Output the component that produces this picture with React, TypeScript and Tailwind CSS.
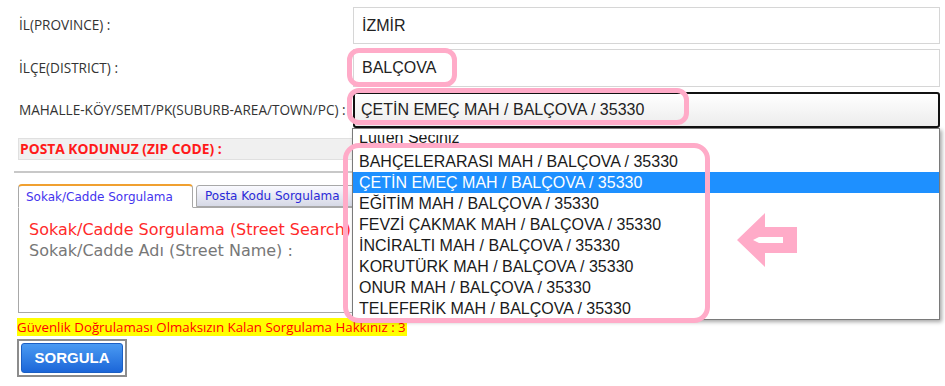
const options = [
  'Lütfen Seçiniz',
  'BAHÇELERARASI MAH / BALÇOVA / 35330',
  'ÇETİN EMEÇ MAH / BALÇOVA / 35330',
  'EĞİTİM MAH / BALÇOVA / 35330',
  'FEVZİ ÇAKMAK MAH / BALÇOVA / 35330',
  'İNCİRALTI MAH / BALÇOVA / 35330',
  'KORUTÜRK MAH / BALÇOVA / 35330',
  'ONUR MAH / BALÇOVA / 35330',
  'TELEFERİK MAH / BALÇOVA / 35330',
];

const label = "w-[334px] shrink-0 text-[13.6px] text-[#333] font-['Open_Sans',sans-serif]";
const field = "flex h-full w-[587px] items-center border border-[#d6d6d6] pl-[8px] text-[16px] text-[#222] font-['Liberation_Sans',Arial,sans-serif]";

export default function App() {
  return (
    <div className="relative h-[386px] w-[945px] overflow-hidden bg-white">
      <div className="pl-[19px] pt-[7px]">
        <div className="flex h-[37px] items-center">
          <span className={label}>İL(PROVINCE) :</span>
          <div className={field}>İZMİR</div>
        </div>
        <div className="mt-[5px] flex h-[38px] items-center">
          <span className={label}>İLÇE(DISTRICT) :</span>
          <div className={field}>
            <span className="relative z-10">BALÇOVA</span>
          </div>
        </div>
        <div className="mt-[5px] flex h-[36px] items-center">
          <span className={label}>MAHALLE-KÖY/SEMT/PK(SUBURB-AREA/TOWN/PC) :</span>
          <div className="flex h-full w-[587px] items-center rounded-[3px] border-2 border-[#111] bg-gradient-to-b from-white to-[#ececec] pl-[6px] text-[16px] text-[#222] font-['Liberation_Sans',Arial,sans-serif]">
            <span className="relative z-10">ÇETİN EMEÇ MAH / BALÇOVA / 35330</span>
          </div>
        </div>

        <div className="-ml-[1px] mt-[10px] flex h-[22px] w-[922px] items-center border border-[#e0e0e0] bg-[#f0f0f0] pl-[1px] text-[13.8px] font-bold text-[#ff1a1a] font-['Open_Sans',sans-serif]">
          POSTA KODUNUZ (ZIP CODE) :
        </div>

        <div className="-ml-[5px] mt-[11px] h-[2px] w-[926px] bg-[#c8c8c8]" />

        <div className="-ml-[1px] mt-[11px] flex items-end font-['DejaVu_Sans',Verdana,sans-serif]">
          <div className="relative z-[1] -mb-[1px] flex h-[24px] w-[175px] items-center rounded-t-[4px] border border-t-2 border-[#a8a8a8] border-t-[#f0a030] border-b-white bg-white pl-[7px] text-[12px] text-[#4433ee]">
            Sokak/Cadde Sorgulama
          </div>
          <div className="ml-[3px] flex h-[22px] w-[200px] items-center rounded-t-[3px] border border-[#a8a8a8] bg-gradient-to-b from-[#fafaff] to-[#d6d9e6] pl-[8px] text-[12px] text-[#2a2ad8]">
            Posta Kodu Sorgulama
          </div>
        </div>
        <div className="-ml-[1px] h-[106px] w-[700px] border border-[#a8a8a8] px-[10px] pt-[11px] text-[16px] leading-[21px] font-['DejaVu_Sans',Verdana,sans-serif]">
          <div className="text-[#ff2a2a]">Sokak/Cadde Sorgulama (Street Search)</div>
          <div className="text-[#777]">Sokak/Cadde Adı (Street Name) :</div>
        </div>

        <div className="-ml-[2px] mt-[5px] inline-block h-[18px] bg-[#ffff00] pr-[1px] text-[13.3px] leading-[18px] text-[#ff0000] font-['Open_Sans',sans-serif]">
          Güvenlik Doğrulaması Olmaksızın Kalan Sorgulama Hakkınız : 3
        </div>
        <div className="-ml-[2px] mt-[1px] flex h-[38px] w-[110px] items-center justify-center border-2 border-[#8c8c8c] bg-white p-[2px]">
          <button className="flex h-full w-full items-center justify-center rounded-[3px] border border-[#1b5fc4] bg-gradient-to-b from-[#4a9af2] to-[#1c66d8] text-[15px] font-bold text-white font-['Liberation_Sans',Arial,sans-serif]">
            SORGULA
          </button>
        </div>
      </div>

      {/* opened select list */}
      <div className="absolute left-[352px] top-[128px] z-20 h-[192px] w-[588px] overflow-hidden border border-[#7a7a7a] bg-white pt-[1px] shadow-[2px_2px_4px_rgba(0,0,0,0.35)] font-['Liberation_Sans',Arial,sans-serif] text-[16px] text-[#1a1a1a]">
        {options.map((o, i) =>
          i === 0 ? (
            <div key={o} className="h-[21px] pl-[6px] pt-[5px]">
              <div className="h-[16px] overflow-hidden">
                <div className="-mt-[8px] leading-[21px]">{o}</div>
              </div>
            </div>
          ) : (
            <div
              key={o}
              className={i === 2 ? 'flex h-[21px] items-center bg-[#1e90ff] pl-[6px] text-white' : 'flex h-[21px] items-center pl-[6px]'}
            >
              {o}
            </div>
          ),
        )}
      </div>

      {/* annotations */}
      <div className="absolute left-[347px] top-[48px] z-30 h-[39px] w-[110px] rounded-[12px] border-[5px] border-[#ffabc8]" />
      <div className="absolute left-[347px] top-[88px] z-30 h-[37px] w-[342px] rounded-[12px] border-[5px] border-[#ffabc8]" />
      <div className="absolute left-[343px] top-[143px] z-30 h-[180px] w-[367px] rounded-[16px] border-[5px] border-[#ffabc8]" />
      <svg className="absolute left-[735px] top-[212px] z-30" width="64" height="56" viewBox="0 0 64 56">
        <polygon points="2,28 30,1 30,15 62,15 62,41 30,41 30,55" fill="#ffabc8" />
        <polygon points="18,28 24,25 48,25 48,31 24,31" fill="#fff" />
      </svg>
    </div>
  );
}
